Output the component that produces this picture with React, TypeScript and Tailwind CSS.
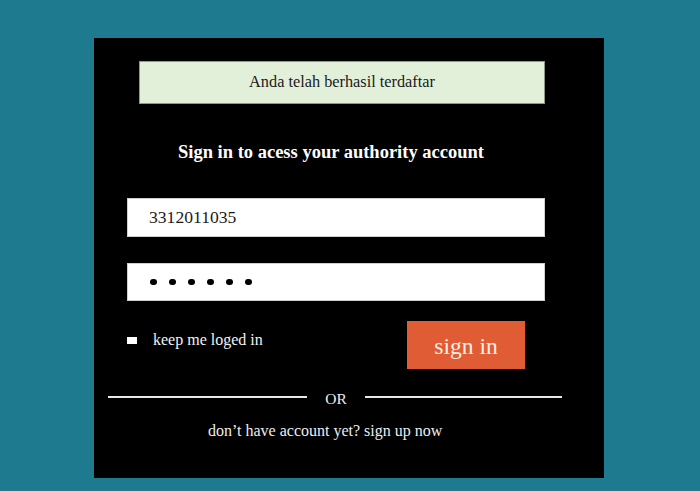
export default function App() {
	return (
		<div
			className="min-h-[491px] w-full bg-[#1e7a8f] pt-[38px] pl-[94px]"
			style={{ fontFamily: '"Liberation Serif", "DejaVu Serif", serif' }}>
			<div className="w-[510px] h-[440px] bg-black pt-[23px]">
				<div className="ml-[45px] w-[406px] h-[43px] bg-[#e2f0da] border border-[#8a9a85] flex items-center justify-center pb-[1px] text-[16.3px] text-[#1a1a1a]">
					Anda telah berhasil terdaftar
				</div>

				<h2 className="mt-[36px] ml-[84px] text-[18.5px] leading-[24px] font-bold text-white">
					Sign in to acess your authority account
				</h2>

				<div className="mt-[34px] ml-[33px] w-[418px] h-[39px] bg-white border border-[#cfcfcf] flex items-center pl-[21px] text-[17.6px] text-[#1a1a1a]">
					3312011035
				</div>

				<div className="mt-[26px] ml-[33px] w-[418px] h-[38px] bg-white border border-[#cfcfcf] flex items-center gap-[12px] pl-[22px]">
					{[0, 1, 2, 3, 4, 5].map((i) => (
						<span key={i} className="block w-[7px] h-[6px] rounded-full bg-black" />
					))}
				</div>

				<div className="mt-[20px] ml-[33px] w-[398px] flex items-start justify-between">
					<label className="mt-[9px] flex items-center gap-[16px] text-[16px] leading-[20px] text-[#f2f2f2]">
						<span className="block w-[10px] h-[7px] bg-white" />
						keep me loged in
					</label>
					<button className="w-[118px] h-[48px] bg-[#e05c34] pt-[3px] text-[23.5px] text-[#fbefe8] flex items-center justify-center">
						sign in
					</button>
				</div>

				<div className="mt-[18px] ml-[14px] w-[454px] h-[20px] flex items-center">
					<div className="w-[199px] h-[2px] bg-[#e8e8e8]" />
					<span className="w-[58px] pt-[3px] text-center text-[15.5px] text-[#eeeeee]">OR</span>
					<div className="w-[197px] h-[2px] bg-[#e8e8e8]" />
				</div>

				<p className="mt-[14px] ml-[114px] text-[16px] leading-[20px] text-[#eeeeee]">
					don’t have account yet? sign up now
				</p>
			</div>
		</div>
	);
}
